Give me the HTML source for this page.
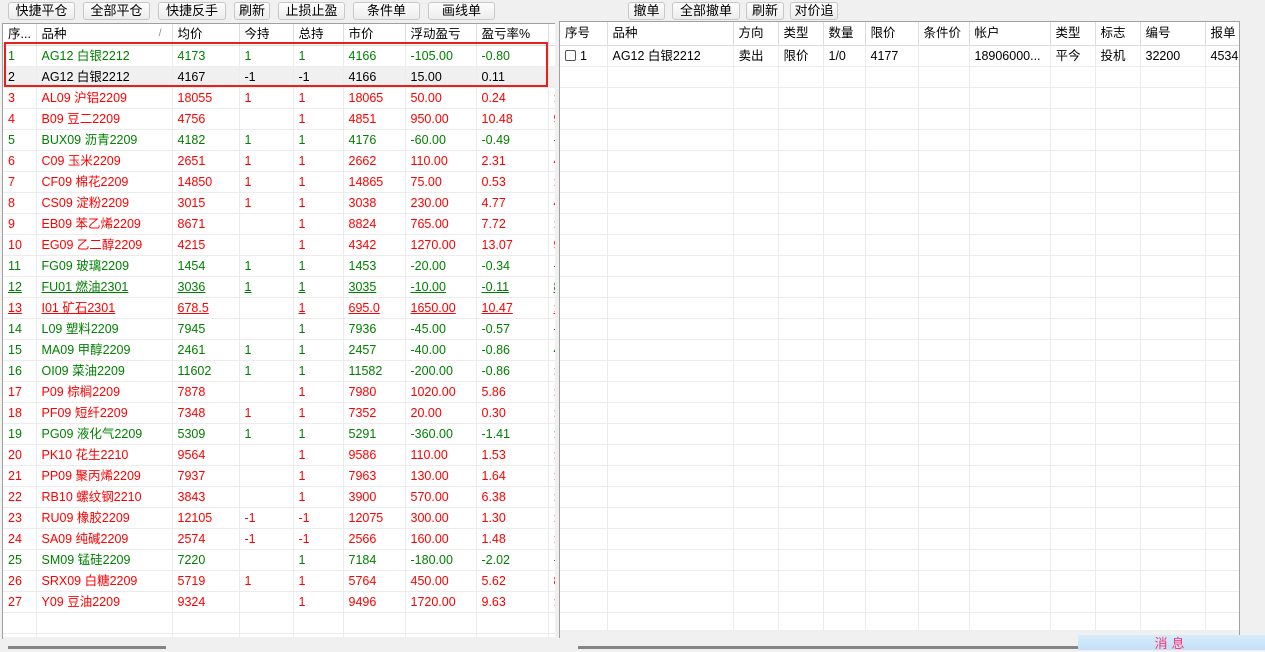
<!DOCTYPE html>
<html><head><meta charset="utf-8"><style>
*{margin:0;padding:0;box-sizing:border-box}
body{width:1265px;height:650px;background:#f0f0f0;font-family:"Liberation Sans","Noto Sans CJK SC",sans-serif;font-size:12px;position:relative;overflow:hidden}
.btn{position:absolute;top:2px;height:18px;border:1px solid #c8c8c8;border-radius:3px;background:linear-gradient(#fdfdfd,#ececec);font-size:13px;text-align:center;line-height:16px;color:#000}
.panel{position:absolute;background:#fff;overflow:hidden}
table{border-collapse:collapse;table-layout:fixed;position:absolute;left:0;top:0}
td{height:21px;border-right:1px solid #ececec;border-bottom:1px solid #ececec;padding-left:5px;white-space:nowrap;overflow:hidden;font-size:12.5px;line-height:20px;position:relative}
tr.h td{background:#fff;color:#000;border-right:1px solid #dcdcdc;border-bottom:1px solid #dcdcdc;font-size:12.5px}
.g td{color:#008000}.r td{color:#ff0000}.k td{color:#000;background:#f0f0f0}
.u td{text-decoration:underline}
</style></head><body>
<div class="btn" style="left:8px;width:67px">快捷平仓</div>
<div class="btn" style="left:83px;width:67px">全部平仓</div>
<div class="btn" style="left:158px;width:68px">快捷反手</div>
<div class="btn" style="left:234px;width:36px">刷新</div>
<div class="btn" style="left:278px;width:67px">止损止盈</div>
<div class="btn" style="left:353px;width:67px">条件单</div>
<div class="btn" style="left:428px;width:67px">画线单</div>
<div class="btn" style="left:628px;width:37px">撤单</div>
<div class="btn" style="left:672px;width:68px">全部撤单</div>
<div class="btn" style="left:746px;width:38px">刷新</div>
<div class="btn" style="left:790px;width:48px">对价追</div>

<div class="panel" style="left:2px;top:23px;width:553px;height:616px;border-left:1px solid #a0a0a0;border-top:1px solid #a0a0a0">
<table style="width:570px">
<colgroup><col style="width:33px"><col style="width:136px"><col style="width:67px"><col style="width:54px"><col style="width:50px"><col style="width:62px"><col style="width:71px"><col style="width:72px"><col style="width:25px"></colgroup>
<tr class="h"><td>序...</td><td>品种<span style="position:absolute;right:10px;top:0;color:#888;font-size:10px">/</span></td><td>均价</td><td>今持</td><td>总持</td><td>市价</td><td>浮动盈亏</td><td>盈亏率%</td><td></td></tr>
<tr class="g"><td>1</td><td>AG12 白银2212</td><td>4173</td><td>1</td><td>1</td><td>4166</td><td>-105.00</td><td>-0.80</td><td>·</td></tr>
<tr class="k"><td>2</td><td>AG12 白银2212</td><td>4167</td><td>-1</td><td>-1</td><td>4166</td><td>15.00</td><td>0.11</td><td></td></tr>
<tr class="r"><td>3</td><td>AL09 沪铝2209</td><td>18055</td><td>1</td><td>1</td><td>18065</td><td>50.00</td><td>0.24</td><td>:</td></tr>
<tr class="r"><td>4</td><td>B09 豆二2209</td><td>4756</td><td></td><td>1</td><td>4851</td><td>950.00</td><td>10.48</td><td>9</td></tr>
<tr class="g"><td>5</td><td>BUX09 沥青2209</td><td>4182</td><td>1</td><td>1</td><td>4176</td><td>-60.00</td><td>-0.49</td><td>-</td></tr>
<tr class="r"><td>6</td><td>C09 玉米2209</td><td>2651</td><td>1</td><td>1</td><td>2662</td><td>110.00</td><td>2.31</td><td>4</td></tr>
<tr class="r"><td>7</td><td>CF09 棉花2209</td><td>14850</td><td>1</td><td>1</td><td>14865</td><td>75.00</td><td>0.53</td><td>:</td></tr>
<tr class="r"><td>8</td><td>CS09 淀粉2209</td><td>3015</td><td>1</td><td>1</td><td>3038</td><td>230.00</td><td>4.77</td><td>4</td></tr>
<tr class="r"><td>9</td><td>EB09 苯乙烯2209</td><td>8671</td><td></td><td>1</td><td>8824</td><td>765.00</td><td>7.72</td><td>:</td></tr>
<tr class="r"><td>10</td><td>EG09 乙二醇2209</td><td>4215</td><td></td><td>1</td><td>4342</td><td>1270.00</td><td>13.07</td><td>9</td></tr>
<tr class="g"><td>11</td><td>FG09 玻璃2209</td><td>1454</td><td>1</td><td>1</td><td>1453</td><td>-20.00</td><td>-0.34</td><td>-</td></tr>
<tr class="g u"><td>12</td><td>FU01 燃油2301</td><td>3036</td><td>1</td><td>1</td><td>3035</td><td>-10.00</td><td>-0.11</td><td>8</td></tr>
<tr class="r u"><td>13</td><td>I01 矿石2301</td><td>678.5</td><td></td><td>1</td><td>695.0</td><td>1650.00</td><td>10.47</td><td>:</td></tr>
<tr class="g"><td>14</td><td>L09 塑料2209</td><td>7945</td><td></td><td>1</td><td>7936</td><td>-45.00</td><td>-0.57</td><td>-</td></tr>
<tr class="g"><td>15</td><td>MA09 甲醇2209</td><td>2461</td><td>1</td><td>1</td><td>2457</td><td>-40.00</td><td>-0.86</td><td>4</td></tr>
<tr class="g"><td>16</td><td>OI09 菜油2209</td><td>11602</td><td>1</td><td>1</td><td>11582</td><td>-200.00</td><td>-0.86</td><td>:</td></tr>
<tr class="r"><td>17</td><td>P09 棕榈2209</td><td>7878</td><td></td><td>1</td><td>7980</td><td>1020.00</td><td>5.86</td><td>:</td></tr>
<tr class="r"><td>18</td><td>PF09 短纤2209</td><td>7348</td><td>1</td><td>1</td><td>7352</td><td>20.00</td><td>0.30</td><td>:</td></tr>
<tr class="g"><td>19</td><td>PG09 液化气2209</td><td>5309</td><td>1</td><td>1</td><td>5291</td><td>-360.00</td><td>-1.41</td><td>:</td></tr>
<tr class="r"><td>20</td><td>PK10 花生2210</td><td>9564</td><td></td><td>1</td><td>9586</td><td>110.00</td><td>1.53</td><td>:</td></tr>
<tr class="r"><td>21</td><td>PP09 聚丙烯2209</td><td>7937</td><td></td><td>1</td><td>7963</td><td>130.00</td><td>1.64</td><td>:</td></tr>
<tr class="r"><td>22</td><td>RB10 螺纹钢2210</td><td>3843</td><td></td><td>1</td><td>3900</td><td>570.00</td><td>6.38</td><td>:</td></tr>
<tr class="r"><td>23</td><td>RU09 橡胶2209</td><td>12105</td><td>-1</td><td>-1</td><td>12075</td><td>300.00</td><td>1.30</td><td>:</td></tr>
<tr class="r"><td>24</td><td>SA09 纯碱2209</td><td>2574</td><td>-1</td><td>-1</td><td>2566</td><td>160.00</td><td>1.48</td><td>:</td></tr>
<tr class="g"><td>25</td><td>SM09 锰硅2209</td><td>7220</td><td></td><td>1</td><td>7184</td><td>-180.00</td><td>-2.02</td><td>-</td></tr>
<tr class="r"><td>26</td><td>SRX09 白糖2209</td><td>5719</td><td>1</td><td>1</td><td>5764</td><td>450.00</td><td>5.62</td><td>8</td></tr>
<tr class="r"><td>27</td><td>Y09 豆油2209</td><td>9324</td><td></td><td>1</td><td>9496</td><td>1720.00</td><td>9.63</td><td>:</td></tr>
<tr><td></td><td></td><td></td><td></td><td></td><td></td><td></td><td></td><td></td></tr>
<tr><td></td><td></td><td></td><td></td><td></td><td></td><td></td><td></td><td></td></tr>
</table>
<div style="position:absolute;left:0;top:613px;width:560px;height:10px;background:#f0f0f0"></div>
</div>
<div style="position:absolute;left:4px;top:42px;width:544px;height:45px;border:2px solid #e8201c"></div>
<div style="position:absolute;left:8px;top:646px;width:158px;height:3px;background:#858585"></div>

<div class="panel" style="left:559px;top:21px;width:681px;height:617px;border:1px solid #a0a0a0;border-bottom:none">
<table style="width:700px">
<colgroup><col style="width:47px"><col style="width:126px"><col style="width:45px"><col style="width:45px"><col style="width:42px"><col style="width:53px"><col style="width:51px"><col style="width:81px"><col style="width:45px"><col style="width:45px"><col style="width:65px"><col style="width:55px"></colgroup>
<tr class="h" style="height:23px"><td style="height:23px">序号</td><td>品种</td><td>方向</td><td>类型</td><td>数量</td><td>限价</td><td>条件价</td><td>帐户</td><td>类型</td><td>标志</td><td>编号</td><td>报单</td></tr>
<tr><td><span style="display:inline-block;width:11px;height:11px;border:1px solid #555;border-radius:2px;vertical-align:-1px;margin-right:4px"></span>1</td><td>AG12 白银2212</td><td>卖出</td><td>限价</td><td>1/0</td><td>4177</td><td></td><td>18906000...</td><td>平今</td><td>投机</td><td>32200</td><td>4534</td></tr>
<tr><td></td><td></td><td></td><td></td><td></td><td></td><td></td><td></td><td></td><td></td><td></td><td></td></tr>
<tr><td></td><td></td><td></td><td></td><td></td><td></td><td></td><td></td><td></td><td></td><td></td><td></td></tr>
<tr><td></td><td></td><td></td><td></td><td></td><td></td><td></td><td></td><td></td><td></td><td></td><td></td></tr>
<tr><td></td><td></td><td></td><td></td><td></td><td></td><td></td><td></td><td></td><td></td><td></td><td></td></tr>
<tr><td></td><td></td><td></td><td></td><td></td><td></td><td></td><td></td><td></td><td></td><td></td><td></td></tr>
<tr><td></td><td></td><td></td><td></td><td></td><td></td><td></td><td></td><td></td><td></td><td></td><td></td></tr>
<tr><td></td><td></td><td></td><td></td><td></td><td></td><td></td><td></td><td></td><td></td><td></td><td></td></tr>
<tr><td></td><td></td><td></td><td></td><td></td><td></td><td></td><td></td><td></td><td></td><td></td><td></td></tr>
<tr><td></td><td></td><td></td><td></td><td></td><td></td><td></td><td></td><td></td><td></td><td></td><td></td></tr>
<tr><td></td><td></td><td></td><td></td><td></td><td></td><td></td><td></td><td></td><td></td><td></td><td></td></tr>
<tr><td></td><td></td><td></td><td></td><td></td><td></td><td></td><td></td><td></td><td></td><td></td><td></td></tr>
<tr><td></td><td></td><td></td><td></td><td></td><td></td><td></td><td></td><td></td><td></td><td></td><td></td></tr>
<tr><td></td><td></td><td></td><td></td><td></td><td></td><td></td><td></td><td></td><td></td><td></td><td></td></tr>
<tr><td></td><td></td><td></td><td></td><td></td><td></td><td></td><td></td><td></td><td></td><td></td><td></td></tr>
<tr><td></td><td></td><td></td><td></td><td></td><td></td><td></td><td></td><td></td><td></td><td></td><td></td></tr>
<tr><td></td><td></td><td></td><td></td><td></td><td></td><td></td><td></td><td></td><td></td><td></td><td></td></tr>
<tr><td></td><td></td><td></td><td></td><td></td><td></td><td></td><td></td><td></td><td></td><td></td><td></td></tr>
<tr><td></td><td></td><td></td><td></td><td></td><td></td><td></td><td></td><td></td><td></td><td></td><td></td></tr>
<tr><td></td><td></td><td></td><td></td><td></td><td></td><td></td><td></td><td></td><td></td><td></td><td></td></tr>
<tr><td></td><td></td><td></td><td></td><td></td><td></td><td></td><td></td><td></td><td></td><td></td><td></td></tr>
<tr><td></td><td></td><td></td><td></td><td></td><td></td><td></td><td></td><td></td><td></td><td></td><td></td></tr>
<tr><td></td><td></td><td></td><td></td><td></td><td></td><td></td><td></td><td></td><td></td><td></td><td></td></tr>
<tr><td></td><td></td><td></td><td></td><td></td><td></td><td></td><td></td><td></td><td></td><td></td><td></td></tr>
<tr><td></td><td></td><td></td><td></td><td></td><td></td><td></td><td></td><td></td><td></td><td></td><td></td></tr>
<tr><td></td><td></td><td></td><td></td><td></td><td></td><td></td><td></td><td></td><td></td><td></td><td></td></tr>
<tr><td></td><td></td><td></td><td></td><td></td><td></td><td></td><td></td><td></td><td></td><td></td><td></td></tr>
<tr><td></td><td></td><td></td><td></td><td></td><td></td><td></td><td></td><td></td><td></td><td></td><td></td></tr>
</table>
<div style="position:absolute;left:0;top:608px;width:700px;height:12px;background:#f0f0f0"></div>
</div>
<div style="position:absolute;left:578px;top:646px;width:510px;height:3px;background:#858585"></div>
<div style="position:absolute;left:1078px;top:635px;width:187px;height:15px;background:linear-gradient(#d6ecfb,#c4e0f7);color:#ff3070;font-size:13px;text-align:center;line-height:17px;letter-spacing:4px">消息</div>
</body></html>
